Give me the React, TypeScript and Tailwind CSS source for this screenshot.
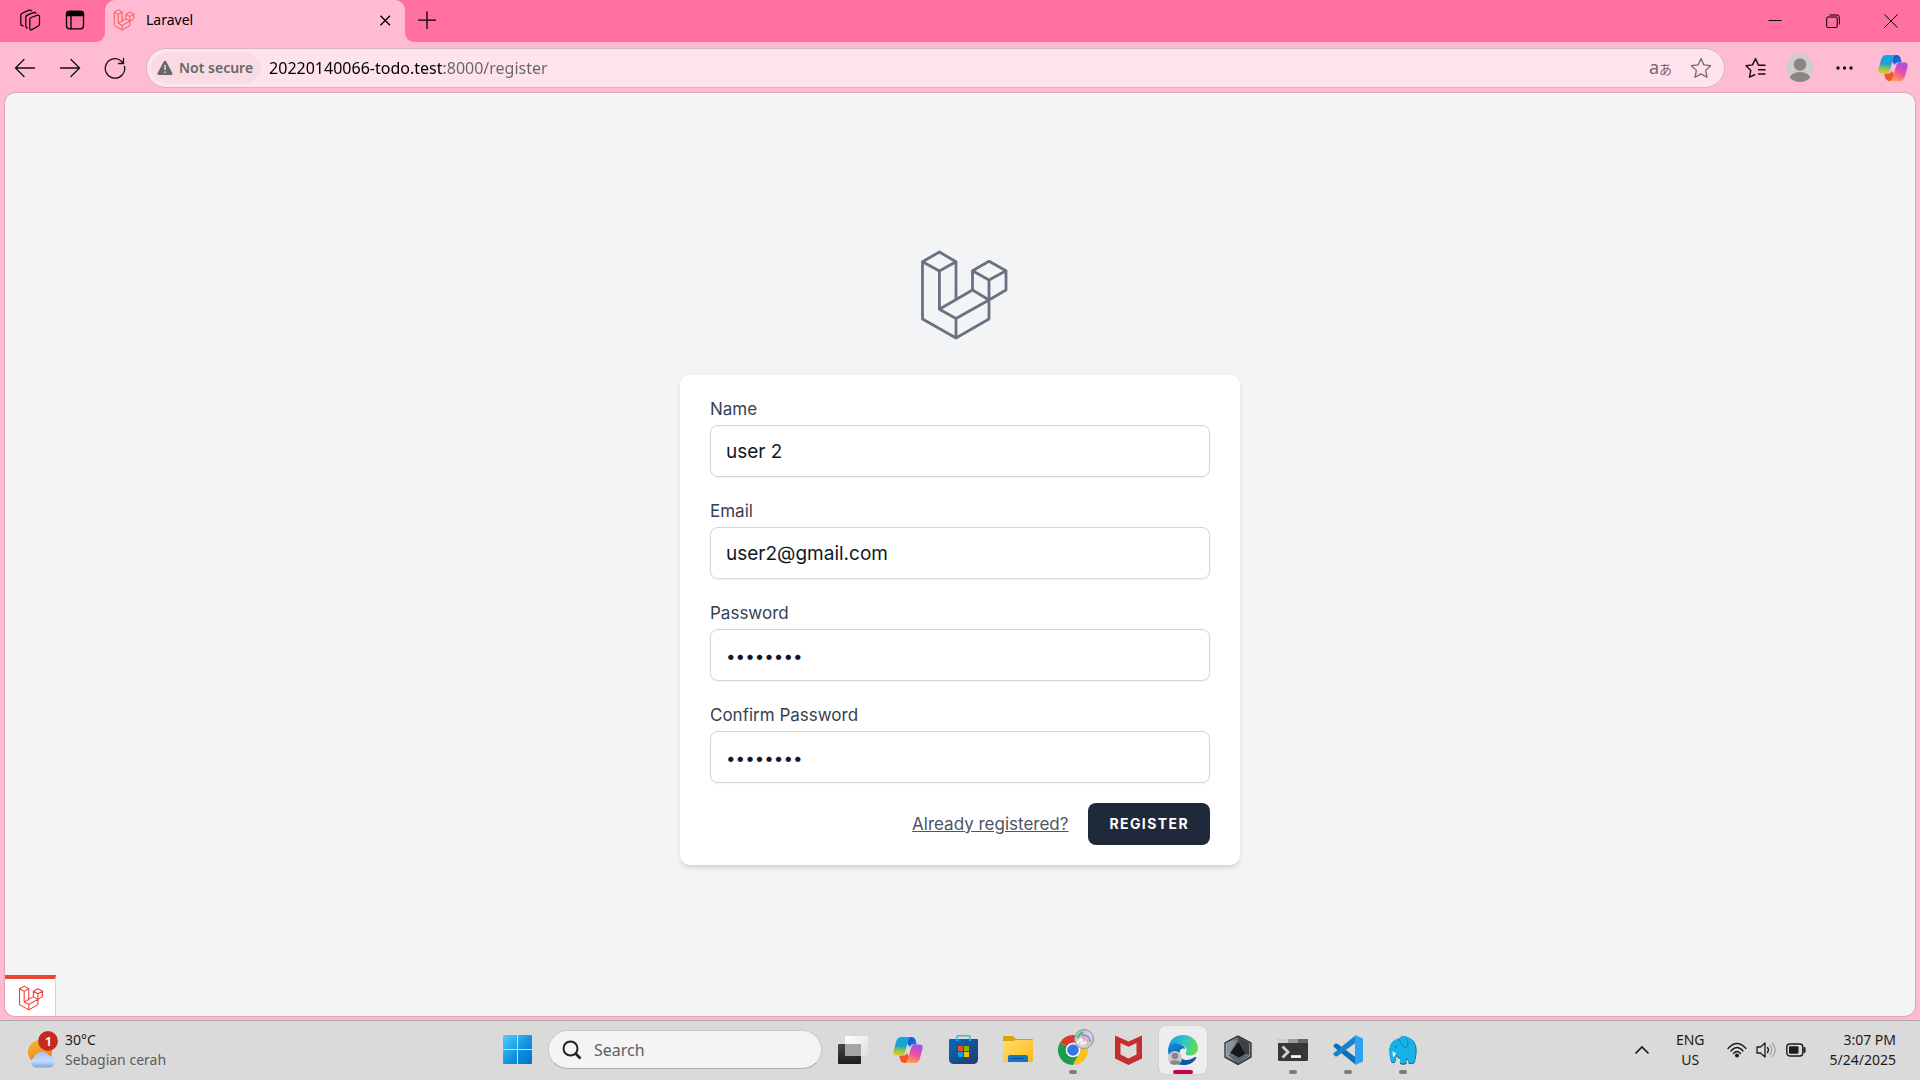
import React from "react";

type Children = { children: React.ReactNode };

const LARAVEL_PATH =
  "M29.4 7 L46 16.7 L29.4 26 L12.5 16.7 Z M12.5 16.7 V74 L46 93 L79 74 V55 L46 73.5 L29.4 64.3 L62.5 45 L79 55 M29.4 26 V64.3 M46 16.7 V54 M46 73.5 V93 M62.5 45 V25.7 L79 16.3 L96 25.7 V45 L79 55 V35 L62.5 25.7 M79 35 L96 25.7";

function LaravelLogo({ className, stroke = 2.8, viewBox = "0 0 100 100" }: { className: string; stroke?: number; viewBox?: string }) {
  return (
    <svg viewBox={viewBox} className={className} fill="none" stroke="currentColor" strokeWidth={stroke} strokeLinejoin="round" aria-hidden="true">
      <path d={LARAVEL_PATH} />
    </svg>
  );
}

function CopilotLogo({ className, id }: { className: string; id: string }) {
  return (
    <svg viewBox="0 0 30 28" className={className} aria-hidden="true">
      <defs>
        <linearGradient id={id + "a"} x1="0.4" y1="0" x2="0.3" y2="1">
          <stop offset="0" stopColor="#12a5f0" />
          <stop offset="0.45" stopColor="#1e9fd0" />
          <stop offset="0.75" stopColor="#8ccb4a" />
          <stop offset="1" stopColor="#f5c51b" />
        </linearGradient>
        <linearGradient id={id + "b"} x1="0.7" y1="0" x2="0.3" y2="1">
          <stop offset="0" stopColor="#a44ff0" />
          <stop offset="0.5" stopColor="#ec4f9c" />
          <stop offset="1" stopColor="#ffa256" />
        </linearGradient>
        <linearGradient id={id + "c"} x1="0" y1="0" x2="1" y2="1">
          <stop offset="0" stopColor="#0a50c8" />
          <stop offset="1" stopColor="#2a7bea" />
        </linearGradient>
      </defs>
      <path d="M14 1 h5 q2.6 0 3.4 2.6 l1.4 4.9 h-4 q-2.400 0-3.200 2.500 l-2.600-4z" fill={`url(#${id}c)`} />
      <path d="M15.500 27 h-4.500 q-2.800 0-3.600-2.700 l-1.300-4.800 h4.200 q2.400 0 3.200-2.500 l3 4z" fill="#f2562b" />
      <path d="M8.500 1 h9.500 q-1.800.5-2.600 3.200 l-3.500 12 q-1 3.300-4.200 3.300 H3.500 q-4 0-3-4.500 L3.300 5 Q4.600 1 8.500 1z" fill={`url(#${id}a)`} />
      <path d="M21.500 27 H12 q1.800-.5 2.600-3.200 l3.500-12 q1-3.300 4.200-3.300 h4.200 q4 0 3 4.500 L26.700 23 q-1.300 4-5.200 4z" fill={`url(#${id}b)`} />
    </svg>
  );
}

function IconButton({ label, className, children }: Children & { label: string; className: string }) {
  return (
    <button type="button" aria-label={label} className={`flex shrink-0 items-center justify-center ${className}`}>
      {children}
    </button>
  );
}

function TitleBar() {
  return (
    <header className="flex h-[42px] shrink-0 bg-[#ffbbd1] text-black">
      <div className="flex bg-[#ff6f9f] rounded-br-[9px]">
        <div className="flex w-[105px] items-center pl-[18px] pb-[2px]">
          <IconButton label="Workspaces" className="size-6">
            <svg viewBox="0 0 24 24" className="size-6" fill="none" stroke="currentColor" strokeWidth="1.200" strokeLinejoin="round">
              <path d="M13 9.500 L19.500 7.300 Q21.500 6.800 21.500 8.800 V15.800 Q21.500 17.400 20 18.200 L13.800 21.600 Q11.800 22.500 11.800 20.300 V11.500 Q11.800 10 13 9.500z" />
              <path d="M9.800 19.800 Q7.800 20 7.800 18 V9.300 Q7.800 7.700 9.200 7.100 L15.500 4.600 Q17.500 4 17.900 5.800" />
              <path d="M5.500 17.800 Q2.800 17.800 2.800 15.500 V7.500 Q2.800 5.800 4.200 5.200 L10.500 2.400 Q13 1.600 13.700 3.300" />
            </svg>
          </IconButton>
          <IconButton label="Tab actions" className="ml-[21px] size-6">
            <svg viewBox="0 0 24 24" className="size-6" fill="none" stroke="currentColor" strokeWidth="1.300">
              <rect x="3.500" y="3.300" width="17" height="17.500" rx="3" />
              <path d="M3.500 7.500 V6 Q3.500 3.500 6 3.500 H18 Q20.500 3.500 20.500 6 V7.500z" fill="currentColor" />
              <path d="M8 8 V21" />
            </svg>
          </IconButton>
        </div>
      </div>
      <div className="bg-[#ff6f9f]">
        <div className="flex h-full w-[300px] items-center rounded-t-[10px] bg-[#ffbbd1] pl-[8px] pr-[8px] pb-[3px]">
          <LaravelLogo className="size-[22px] text-[#f5504a]" stroke={4} viewBox="8 3 92 94" />
          <span className="ml-[11px] grow font-['Noto_Sans'] text-[14px]">Laravel</span>
          <IconButton label="Close tab" className="size-6">
            <svg viewBox="0 0 24 24" className="size-6" stroke="currentColor" strokeWidth="1.400"><path d="M7.500 7.800 L17 17.300 M17 7.800 L7.500 17.300" /></svg>
          </IconButton>
        </div>
      </div>
      <div className="flex grow items-center rounded-bl-[9px] bg-[#ff6f9f] pb-[3px] pl-[10px]">
        <IconButton label="New tab" className="size-6">
          <svg viewBox="0 0 24 24" className="size-6" stroke="currentColor" strokeWidth="1.300"><path d="M12 3.500 V21 M3 12.200 H21" /></svg>
        </IconButton>
        <div className="ml-auto flex pt-[2px]">
          <IconButton label="Minimize" className="h-10 w-[58px]">
            <svg viewBox="0 0 14 14" className="size-[14px]" stroke="currentColor"><path d="M0.500 6.500 H13.500" /></svg>
          </IconButton>
          <IconButton label="Restore" className="h-10 w-[58px]">
            <svg viewBox="0 0 14 14" className="size-[14px]" fill="none" stroke="currentColor"><rect x="0.700" y="3" width="10.500" height="10.500" rx="1" /><path d="M3.500 1 H11 Q13.300 1 13.300 3.300 V10.500" /></svg>
          </IconButton>
          <IconButton label="Close window" className="h-10 w-[58px]">
            <svg viewBox="0 0 14 14" className="size-[14px]" stroke="currentColor"><path d="M0.500 0.500 L13.500 13.500 M13.500 0.500 L0.500 13.500" /></svg>
          </IconButton>
        </div>
      </div>
    </header>
  );
}

const STAR = "M12 2.600 L14.900 8.900 L21.600 9.700 L16.600 14.400 L18 21.200 L12 17.900 L6 21.200 L7.400 14.400 L2.400 9.700 L9.100 8.900 Z";

function Toolbar() {
  return (
    <nav aria-label="Browser toolbar" className="flex h-[51px] shrink-0 items-center bg-[#ffbbd1] pr-[12px] pl-[12px] text-[#111]">
      <IconButton label="Back" className="size-[26px]">
        <svg viewBox="0 0 26 26" className="size-[26px]" fill="none" stroke="currentColor" strokeWidth="1.300" strokeLinecap="round"><path d="M22.500 13 H4 M12 4.500 L3.500 13 L12 21.500" /></svg>
      </IconButton>
      <IconButton label="Forward" className="ml-[19px] size-[26px]">
        <svg viewBox="0 0 26 26" className="size-[26px]" fill="none" stroke="currentColor" strokeWidth="1.300" strokeLinecap="round"><path d="M3.500 13 H22 M14 4.500 L22.500 13 L14 21.500" /></svg>
      </IconButton>
      <IconButton label="Refresh" className="ml-[19px] size-[26px]">
        <svg viewBox="0 0 26 26" className="size-[26px]" fill="none" stroke="currentColor" strokeWidth="1.300" strokeLinecap="round"><path d="M22.500 11.500 A9.700 9.700 0 1 1 19.500 6.200 L21 8 M21.500 3.500 V8.500 H16.500" /></svg>
      </IconButton>
      <div className="ml-[18px] flex h-10 grow items-center rounded-full border border-[#d5b4bf] bg-[#ffe3ec] pr-[11px] pl-[4px]">
        <button type="button" className="flex h-[30px] shrink-0 items-center gap-[6px] rounded-full bg-[#f8dbe4] pr-[8px] pl-[6px] font-['Noto_Sans'] text-[14px] font-semibold text-[#686868]">
          <svg viewBox="0 0 16 16" className="size-4"><path d="M8 0.800 Q8.800 0.800 9.200 1.600 L15.400 13 Q16 14.800 14.300 15 H1.700 Q0 14.800 0.600 13 L6.800 1.600 Q7.200 0.800 8 0.800z" fill="currentColor" /><path d="M8 5 V10 M8 11.400 V13" stroke="#f8dbe4" strokeWidth="1.400" /></svg>
          Not secure
        </button>
        <input
          aria-label="Address"
          defaultValue="20220140066-todo.test:8000/register"
          className="ml-[8px] h-8 min-w-0 grow bg-[linear-gradient(to_right,#000_175px,#666_175px)] bg-clip-text font-['Noto_Sans'] text-[16px] text-transparent caret-black"
        />
        <button type="button" aria-label="Translate" className="flex items-baseline font-['Noto_Sans','Noto_Sans_CJK_JP',sans-serif] text-[#75666b]"><span className="text-[18px]">a</span><span className="text-[13px]">あ</span></button>
        <IconButton label="Add to favorites" className="ml-[17px] size-6">
          <svg viewBox="0 0 24 24" className="size-6" fill="none" stroke="#75666b" strokeWidth="1.300" strokeLinejoin="round"><path d={STAR} /></svg>
        </IconButton>
      </div>
      <IconButton label="Favorites" className="ml-[19px] size-6">
        <svg viewBox="0 0 24 24" className="size-6" fill="none" stroke="currentColor" strokeWidth="1.400" strokeLinejoin="round"><path d="M21.500 9.300 H14.500 L11.500 2.600 L8.500 8.900 L2 9.700 L6.800 14.400 L5.500 21.200 L11.300 18.500 M14 13.700 H21.500 M14 18 H21.500" /></svg>
      </IconButton>
      <IconButton label="Profile" className="ml-[18px] size-7">
        <svg viewBox="0 0 28 28" className="size-7"><clipPath id="avatar"><circle cx="14" cy="14" r="14" /></clipPath><g clipPath="url(#avatar)"><rect width="28" height="28" fill="#d0ccc9" /><circle cx="14" cy="10.500" r="6.200" fill="#8a8684" /><ellipse cx="14" cy="25" rx="10.500" ry="7" fill="#8a8684" /></g></svg>
      </IconButton>
      <IconButton label="Settings and more" className="ml-[19px] size-6">
        <svg viewBox="0 0 24 24" className="size-6" fill="currentColor"><circle cx="5" cy="12" r="1.700" /><circle cx="11.500" cy="12" r="1.700" /><circle cx="18" cy="12" r="1.700" /></svg>
      </IconButton>
      <IconButton label="Copilot" className="ml-[21px] h-7 w-[30px]">
        <CopilotLogo className="h-7 w-[30px]" id="cpt" />
      </IconButton>
    </nav>
  );
}

function Field({ id, label, type, value }: { id: string; label: string; type: string; value: string }) {
  return (
    <div>
      <label htmlFor={id} className="block pt-[2px] text-[17px] leading-[25px] font-normal text-gray-700">{label}</label>
      <input
        id={id}
        type={type}
        defaultValue={value}
        className={`mt-[3px] block h-[52px] w-full rounded-lg border border-gray-300 bg-white px-[15px] pt-[2px] text-gray-900 shadow-xs ${type === "password" ? "text-[17px]" : "text-[19px]"}`}
      />
    </div>
  );
}

function RegisterPage() {
  return (
    <main className="relative flex grow flex-col items-center justify-center overflow-hidden rounded-[10px] bg-gray-100 font-['Inter'] shadow-[0_0_2px_rgba(90,40,60,0.5)]">
      <a href="#home" aria-label="Laravel" className="text-gray-500">
        <LaravelLogo className="size-[100px]" />
      </a>
      <form className="mt-[30px] flex w-full max-w-[560px] flex-col gap-5 rounded-[10px] bg-white px-[30px] py-5 shadow-md">
        <Field id="name" label="Name" type="text" value="user 2" />
        <Field id="email" label="Email" type="email" value="user2@gmail.com" />
        <Field id="password" label="Password" type="password" value="password" />
        <Field id="confirm" label="Confirm Password" type="password" value="password" />
        <div className="flex items-center justify-end gap-5">
          <a href="#login" className="pt-[2px] text-[17px] text-gray-600 underline">Already registered?</a>
          <button type="button" className="h-[42px] rounded-lg bg-gray-800 px-[21px] text-[14px] font-bold tracking-widest text-white uppercase">Register</button>
        </div>
      </form>
      <button type="button" aria-label="Open debug bar" className="absolute bottom-0 left-0 flex h-[41px] w-[51px] items-center justify-center border-t-4 border-r border-t-[#eb4432] border-r-gray-300 bg-white pl-[2px] text-[#f4403a]">
        <LaravelLogo className="size-[26px]" stroke={4} viewBox="8 3 92 94" />
      </button>
    </main>
  );
}

function TaskItem({ label, active, running, children }: Children & { label: string; active?: boolean; running?: boolean }) {
  return (
    <button
      type="button"
      aria-label={label}
      className={`relative flex size-12 shrink-0 items-center justify-center rounded-md ${active ? "bg-[#ededed] shadow-[0_0_1px_rgba(0,0,0,0.35)]" : ""}`}
    >
      {children}
      {active && <span className="absolute bottom-0 h-1 w-5 rounded-full bg-[#c9005b]" />}
      {running && <span className="absolute bottom-0 h-1 w-2 rounded-full bg-[#7c7c7c]" />}
    </button>
  );
}

function Taskbar() {
  return (
    <footer className="grid h-[60px] shrink-0 grid-cols-[1fr_auto_1fr] items-center border-t border-[#ababab] bg-[#dadada] pb-[2px] font-['Noto_Sans'] text-[14px] text-[#1b1b1b]">
      <button type="button" className="flex items-center gap-[7px] pl-[26px] text-left">
        <svg viewBox="0 0 32 38" className="h-[38px] w-[32px]" aria-hidden="true">
          <defs>
            <linearGradient id="sun" x1="0" y1="0" x2="0.400" y2="1"><stop offset="0" stopColor="#f6bd32" /><stop offset="1" stopColor="#ee7d1c" /></linearGradient>
            <linearGradient id="cloud" x1="0" y1="0" x2="0" y2="1"><stop offset="0" stopColor="#a9c2f0" /><stop offset="0.600" stopColor="#c3dcfa" /><stop offset="1" stopColor="#7fa6ea" /></linearGradient>
          </defs>
          <circle cx="14" cy="21" r="12" fill="url(#sun)" />
          <path d="M9 36.500 A5.500 5.500 0 0 1 8 26.500 A8.500 8.500 0 0 1 23 24.500 A6.200 6.200 0 0 1 24.500 36.500z" fill="url(#cloud)" />
          <circle cx="22" cy="10" r="9.900" fill="#c42b1c" />
          <text x="22.500" y="15" fontSize="13" fontWeight="600" textAnchor="middle" fill="#fff" fontFamily="Noto Sans">1</text>
        </svg>
        <span className="flex flex-col leading-5"><span>30°C</span><span className="text-[#5c5c5c]">Sebagian cerah</span></span>
      </button>
      <div className="flex items-center gap-[7px]">
        <TaskItem label="Start">
          <svg viewBox="0 0 29 29" className="size-[29px]">
            <defs><linearGradient id="win" x1="0" y1="0" x2="1" y2="1"><stop offset="0" stopColor="#4fd0ff" /><stop offset="0.550" stopColor="#1392e0" /><stop offset="1" stopColor="#0070cc" /></linearGradient></defs>
            <path d="M1 0 H14 V14 H0 V1 Q0 0 1 0z M15 0 H28 Q29 0 29 1 V14 H15z M0 15 H14 V29 H1 Q0 29 0 28z M15 15 H29 V28 Q29 29 28 29 H15z" fill="url(#win)" />
          </svg>
        </TaskItem>
        <label className="flex h-[39px] w-[274px] items-center rounded-full border border-[#cacaca] border-b-[#adadad] bg-[#f4f4f4] pl-[13px]">
          <svg viewBox="0 0 20 20" className="size-5 shrink-0" fill="none" stroke="#222" strokeWidth="2"><circle cx="8.500" cy="8.500" r="7" /><path d="M13.500 13.500 L18.500 18.500" strokeWidth="2.600" /></svg>
          <input aria-label="Search" placeholder="Search" className="ml-[12px] w-full min-w-0 bg-transparent text-[16px] placeholder:text-[#606060]" />
        </label>
        <TaskItem label="Task view">
          <svg viewBox="0 0 30 28" className="h-7 w-[30px]">
            <defs><linearGradient id="tv" x1="0" y1="0" x2="0" y2="1"><stop offset="0" stopColor="#484848" /><stop offset="1" stopColor="#1c1c1c" /></linearGradient><linearGradient id="tw" x1="0" y1="0" x2="1" y2="1"><stop offset="0" stopColor="#ffffff" /><stop offset="1" stopColor="#dedede" /></linearGradient></defs>
            <rect y="8" width="23" height="20" rx="1" fill="url(#tv)" /><rect x="7" width="23" height="20" rx="1" fill="url(#tw)" /><path d="M7 8 H23 V20 H8 Q7 20 7 19z" fill="#a5a5a5" />
          </svg>
        </TaskItem>
        <TaskItem label="Copilot"><CopilotLogo className="h-7 w-[30px]" id="cpb" /></TaskItem>
        <TaskItem label="Microsoft Store">
          <svg viewBox="0 0 29 29" className="size-[29px]">
            <defs><linearGradient id="store" x1="0" y1="0" x2="1" y2="1"><stop offset="0" stopColor="#0669bd" /><stop offset="1" stopColor="#253a68" /></linearGradient></defs>
            <path d="M8 6 V2 Q8 0.800 9.200 0.800 H19.800 Q21 0.800 21 2 V6" fill="none" stroke="#22c1ef" strokeWidth="1.600" />
            <path d="M1 4 H28 Q29 4 29 5 V24 Q29 29 24 29 H5 Q0 29 0 24 V5 Q0 4 1 4z" fill="url(#store)" />
            <path d="M8 4 V6 M21 4 V6" stroke="#22c1ef" strokeWidth="1.600" />
            <path d="M9 11 H14 V16 H9z" fill="#f25022" /><path d="M15 11 H20 V16 H15z" fill="#7fba00" /><path d="M9 17 H14 V22 H9z" fill="#00a4ef" /><path d="M15 17 H20 V22 H15z" fill="#ffb900" />
          </svg>
        </TaskItem>
        <TaskItem label="File Explorer">
          <svg viewBox="0 0 30 27" className="h-[27px] w-[30px]">
            <defs><linearGradient id="fold" x1="0" y1="0" x2="1" y2="1"><stop offset="0" stopColor="#ffdf72" /><stop offset="1" stopColor="#fcb814" /></linearGradient></defs>
            <path d="M1.500 0 H9 Q10 0 11 1 L13 3 H29 Q30 3 30 4 V8 H0 V1.500 Q0 0 1.500 0z" fill="#dfa009" />
            <path d="M0 5 H10 L13 4 H29 Q30 4 30 5 V26 H1 Q0 26 0 25z" fill="url(#fold)" />
            <path d="M5 26 V21 Q5 19 7 19 H23 Q25 19 25 21 V26z" fill="#0f78cc" /><path d="M9 22.500 H21" stroke="#0b4f91" strokeLinecap="round" />
          </svg>
        </TaskItem>
        <TaskItem label="Google Chrome" running>
          <svg viewBox="-3 3 36 36" className="size-9 overflow-visible">
            <defs><linearGradient id="prof" x1="0" y1="0" x2="1" y2="1"><stop offset="0" stopColor="#8fcab6" /><stop offset="0.500" stopColor="#dcd3dd" /><stop offset="1" stopColor="#c9c6cf" /></linearGradient></defs>
            <path d="M15 21 L2 13.500 A15 15 0 0 1 28 13.500z" fill="#dc3a2e" />
            <path d="M15 21 L2 13.500 A15 15 0 0 0 15 36 L21.500 24z" fill="#1e9c4c" />
            <path d="M15 21 V13.500 H28 A15 15 0 0 1 15 36 L21.500 24.500z" fill="#fbc116" />
            <circle cx="15" cy="21" r="7.300" fill="#fff" /><circle cx="15" cy="21" r="5.800" fill="#3578e5" />
            <circle cx="26" cy="10" r="9.500" fill="url(#prof)" stroke="#8f8f8f" />
            <path d="M23 6 Q31 5 32.500 13" fill="none" stroke="#9b8fd8" strokeWidth="2" /><path d="M22 9 Q29 8 30 15" fill="none" stroke="#e3a5b5" strokeWidth="2" /><path d="M19 14 L23 10 L24 15 L29 13" fill="none" stroke="#f1f4ef" strokeWidth="2" /><path d="M19.500 9 Q21 5 25 3" fill="none" stroke="#4db894" strokeWidth="2" />
          </svg>
        </TaskItem>
        <TaskItem label="McAfee">
          <svg viewBox="0 0 27 30" className="h-[30px] w-[27px]"><path d="M0 0.500 L13.500 6.500 L27 0.500 V23.500 L13.500 30 L0 23.500z M5.500 8 V19.500 L13.500 23.500 L21.500 19.500 V8 L13.500 11.800z" fill="#c52e2e" fillRule="evenodd" /></svg>
        </TaskItem>
        <TaskItem label="Microsoft Edge" active>
          <svg viewBox="0 0 30 30" className="size-[30px]">
            <defs>
              <linearGradient id="e1" x1="0" y1="0.300" x2="1" y2="0.500"><stop offset="0" stopColor="#1b9de0" /><stop offset="0.500" stopColor="#2fc3c6" /><stop offset="1" stopColor="#65dc4c" /></linearGradient>
              <linearGradient id="e2" x1="0" y1="0" x2="0.600" y2="1"><stop offset="0" stopColor="#1489dc" /><stop offset="1" stopColor="#0d56a5" /></linearGradient>
            </defs>
            <path d="M0.500 12 C2 4 8 0 15 0 C24 0 30 6.500 30 13 C30 18 26 20.500 22 20.500 C18 20.500 17 19 18 17.500 C20 14 17 10 12 9 C7 8 3 9 0.500 12z" fill="url(#e1)" />
            <path d="M0 15 C0 10 5 7.500 10 8.500 C15 9.500 17.500 12 17 14 C15 12.500 11 14 11.500 19 C12 24 17 27.500 22 26 C25 25 27.500 22 28.500 22.500 C26 27.500 21 30 15 30 C6 30 0 23 0 15z" fill="url(#e2)" />
            <path d="M11.500 19 C12 25 19 27.500 27 22 C29 21.500 28 24 26 26 C21 31 11 31 8 25 C6 21 7 16 11 14.500 Z" fill="#1059aa" />
            <circle cx="7" cy="23" r="7" fill="#cbc9c7" /><circle cx="7" cy="21" r="3.300" fill="#8a8785" /><ellipse cx="7" cy="27.500" rx="4.800" ry="2.200" fill="#8a8785" />
          </svg>
        </TaskItem>
        <TaskItem label="Armoury">
          <svg viewBox="0 0 28 30" className="h-[30px] w-7">
            <defs><linearGradient id="hx" x1="0" y1="0.500" x2="1" y2="0.600"><stop offset="0" stopColor="#a6b3bd" /><stop offset="0.500" stopColor="#5a626a" /><stop offset="1" stopColor="#83878b" /></linearGradient></defs>
            <path d="M14 1 L27 8 V22 L14 29.500 L1 22 V8z" fill="url(#hx)" stroke="#2b2e31" strokeWidth="1.300" />
            <path d="M14 2 L25 8 V20 L21.500 19 L15 6z" fill="#3c4146" />
            <path d="M14.500 6.500 L21.500 19 L15 22.500 L6 18z" fill="#17191c" />
            <path d="M13 5 L5 18 L3 19 V9z" fill="#8593a0" />
            <path d="M4 20 L6 19 L15 23.500 L21.500 20 L24 21.500 L14 27.500z" fill="#5d656d" />
          </svg>
        </TaskItem>
        <TaskItem label="Terminal" running>
          <svg viewBox="0 0 30 22" className="h-[22px] w-[30px]"><rect width="30" height="22" rx="1.500" fill="#373737" /><path d="M1 0 H10 V4 H0 V1z" fill="#cfcfcf" /><path d="M10 0 H20 V4 H10z" fill="#9a9a9a" /><path d="M20 0 H29 L30 1 V4 H20z" fill="#626666" /><path d="M4.500 7.500 L10 13 L4.500 18.500" fill="none" stroke="#d2d2d2" strokeWidth="2.800" /><path d="M13 17.500 H23" stroke="#fff" strokeWidth="2.600" /></svg>
        </TaskItem>
        <TaskItem label="Visual Studio Code" running>
          <svg viewBox="0 0 30 30" className="size-[30px]"><path d="M0.500 10.300 L2.500 8.500 L4 8.600 L23 22.500 V30 L0.500 11.800z" fill="#0e6fb8" /><path d="M0.500 19.700 L2.500 21.500 L4 21.400 L23 7.500 V0 L0.500 18.200z" fill="#1583cd" /><path d="M22 0 L29 3 Q30 3.500 30 4.500 V25.500 Q30 26.500 29 27 L22 30z" fill="#2aa3f3" /></svg>
        </TaskItem>
        <TaskItem label="Laragon" running>
          <svg viewBox="0 0 28 30" className="h-[30px] w-7">
            <path d="M10 3.500 Q14 -0.500 18 2 Q25.500 4 27.300 12 Q28.500 20 25.500 28 Q23 30 19.500 28.500 L19 25 H17.500 V29 Q14 30.500 11 29 V24 Q8.500 23 7.500 21 Q7 25.500 6 27.500 Q4 29 2 27 Q0.300 21 0.500 14 Q1 5.500 10 3.500z" fill="#0f5f80" />
            <path d="M10 3.500 Q14 -0.500 18 2 Q25 4 26.500 12 Q27.500 20 25 27.500 Q22.500 29 19.500 27.500 L19 24 H17 V28 Q14 29.500 11 28 V23 Q8.500 22 7.500 20 Q6.500 25.500 5.500 27 Q3.500 28 2 26 Q0.300 21 0.500 14 Q1 5.500 10 3.500z" fill="#18b2e8" />
            <path d="M10 4 Q12.500 11.500 17 12.500 Q20.500 10 17.500 3" fill="none" stroke="#0888ba" />
            <path d="M3.500 16 Q5 18 7 18 Q5.500 22 4 22z" fill="#eef8fb" />
            <circle cx="7" cy="12" r="0.700" fill="#075575" />
          </svg>
        </TaskItem>
      </div>
      <div className="flex items-center justify-end pr-[24px]">
        <IconButton label="Show hidden icons" className="size-6">
          <svg viewBox="0 0 24 24" className="size-6" fill="none" stroke="currentColor" strokeWidth="1.700" strokeLinecap="round"><path d="M6 15 L12 9 L18 15" /></svg>
        </IconButton>
        <button type="button" className="ml-[22px] flex flex-col items-center leading-5"><span>ENG</span><span>US</span></button>
        <button type="button" aria-label="Network, sound and battery" className="ml-[22px] flex items-center gap-[9px]">
          <svg viewBox="0 0 20 16" className="h-4 w-5" fill="none" stroke="currentColor" strokeWidth="1.300" strokeLinecap="round"><path d="M1 6.500 Q10 -3.500 19 6.500 M4 9 Q10 2 16 9 M6.500 11.500 Q10 7.500 13.500 11.500" /><circle cx="10" cy="13.500" r="1.300" fill="currentColor" /></svg>
          <svg viewBox="0 0 21 18" className="h-[18px] w-[21px]" fill="none" stroke="currentColor" strokeWidth="1.300" strokeLinecap="round"><path d="M1 6 H4.500 L9 2 V16 L4.500 12 H1z" strokeLinejoin="round" /><path d="M11.500 6.500 Q13.500 9 11.500 11.500" /><path d="M14 4.500 Q17.500 9 14 13.500 M16.500 2.500 Q22 9 16.500 15.500" stroke="#a5a5a5" /></svg>
          <svg viewBox="0 0 20 14" className="h-[14px] w-5" fill="none" stroke="currentColor" strokeWidth="1.400"><rect x="0.800" y="1" width="16" height="12" rx="3" /><rect x="3" y="3.200" width="9.500" height="7.600" rx="1" fill="currentColor" stroke="none" /><path d="M18.500 5 V9" strokeWidth="2" strokeLinecap="round" /></svg>
        </button>
        <button type="button" className="ml-[24px] flex flex-col items-end leading-5"><span>3:07 PM</span><span>5/24/2025</span></button>
      </div>
    </footer>
  );
}

export default function App() {
  return (
    <div className="flex h-screen flex-col overflow-hidden bg-[#ffbbd1]">
      <TitleBar />
      <Toolbar />
      <div className="flex grow px-[5px] pb-1">
        <RegisterPage />
      </div>
      <Taskbar />
    </div>
  );
}
